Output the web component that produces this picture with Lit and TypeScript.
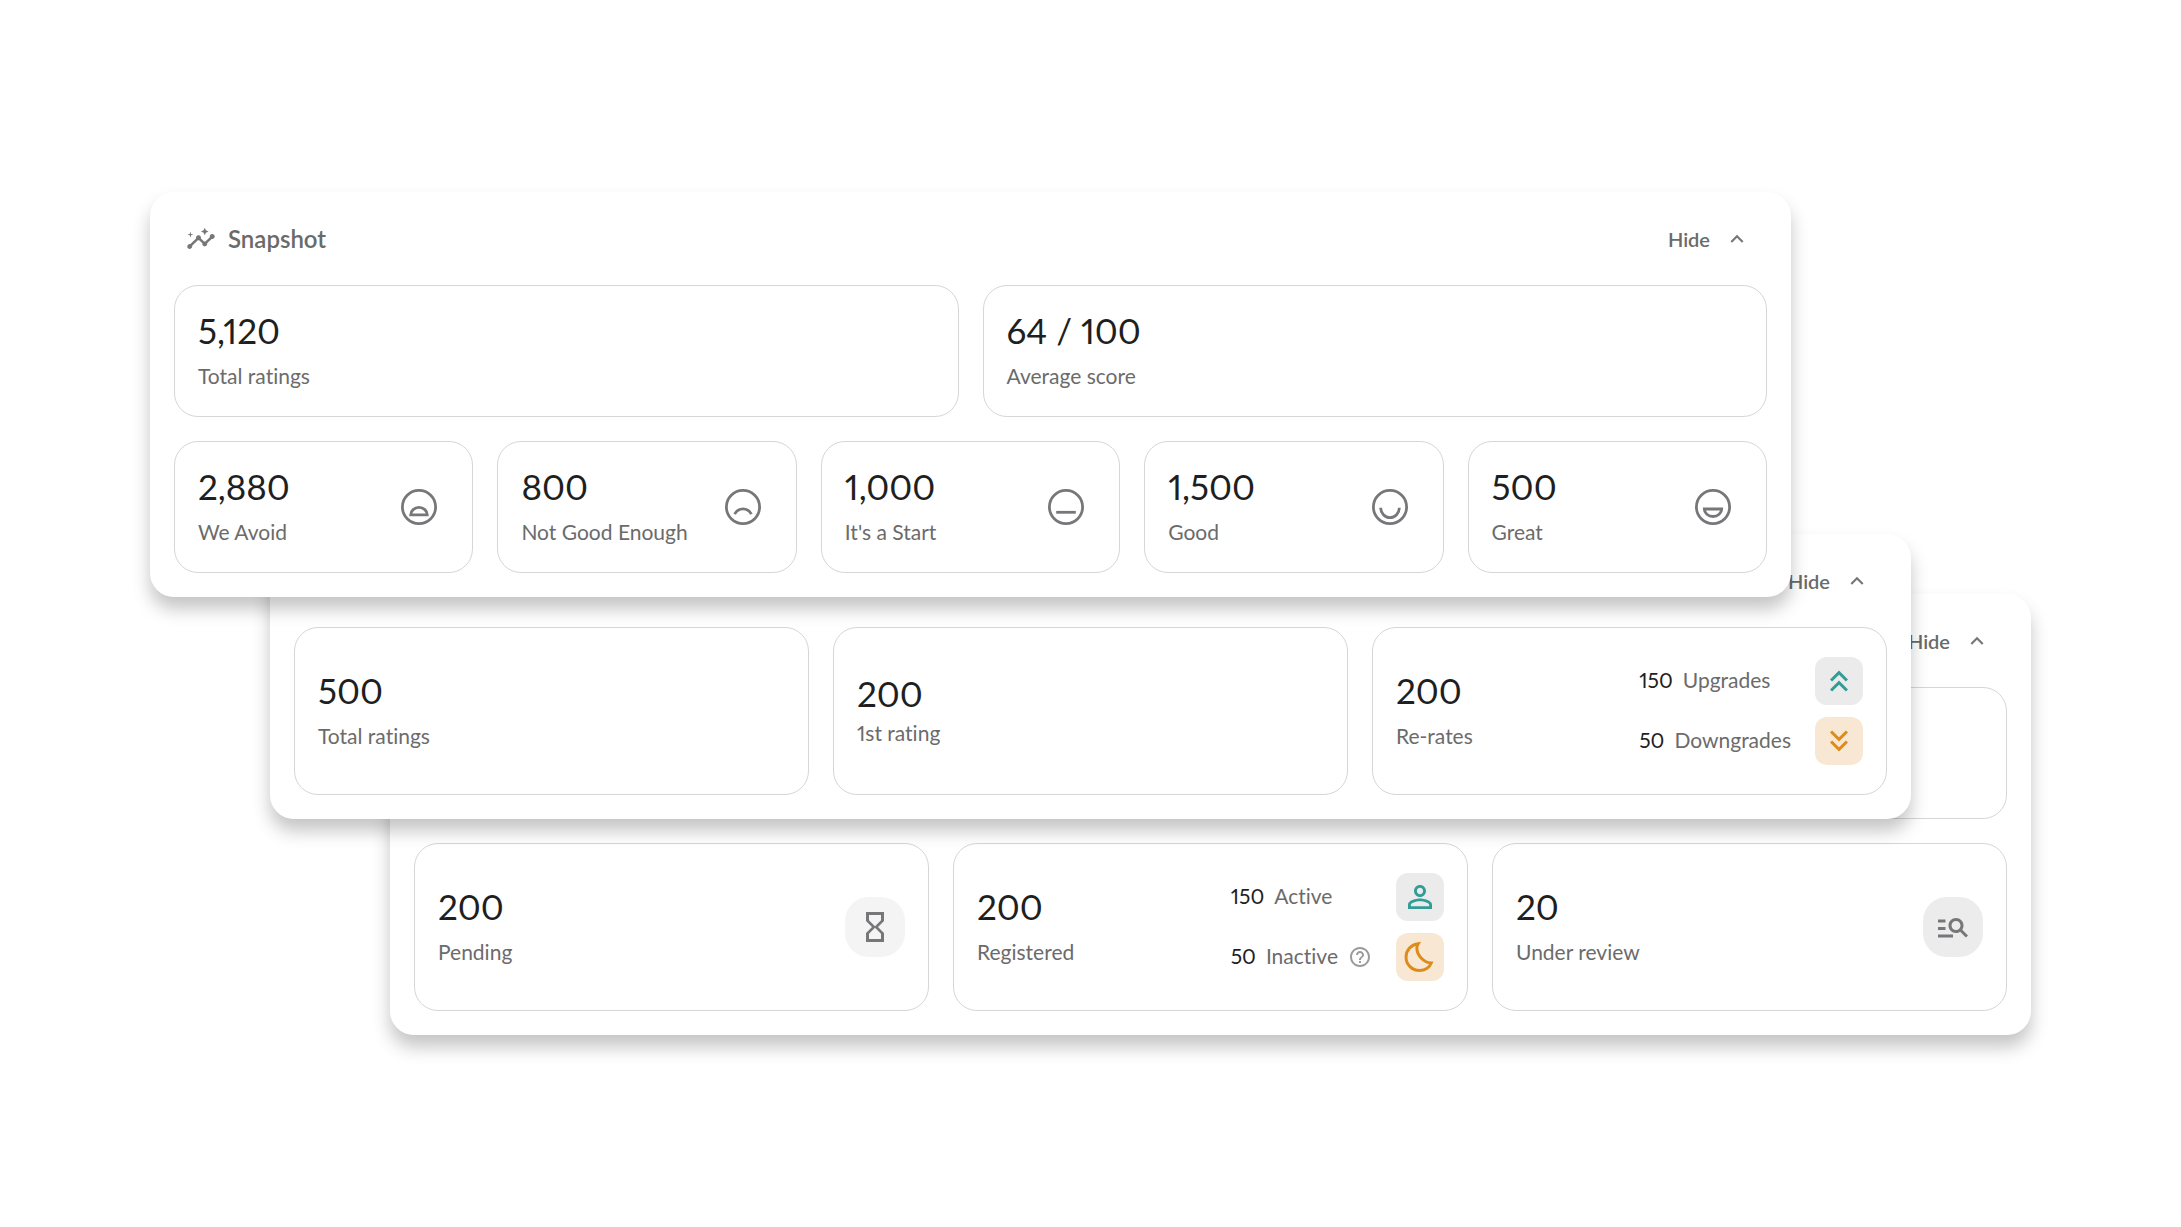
import { LitElement, html, css, svg, nothing, type TemplateResult } from "lit";
import { customElement, property } from "lit/decorators.js";

const icons: Record<string, TemplateResult> = {
  insights: svg`<path d="M21 8c-1.45 0-2.26 1.44-1.93 2.51l-3.55 3.56c-.3-.09-.74-.09-1.04 0l-2.55-2.55C12.27 10.45 11.46 9 10 9c-1.45 0-2.27 1.44-1.93 2.52l-4.56 4.55C2.44 15.74 1 16.55 1 18c0 1.1.9 2 2 2 1.45 0 2.26-1.44 1.93-2.51l4.55-4.56c.3.09.74.09 1.04 0l2.55 2.55C12.73 16.55 13.54 18 15 18c1.45 0 2.27-1.44 1.93-2.52l3.56-3.55C21.56 12.26 23 11.45 23 10c0-1.1-.9-2-2-2z"/><path d="M15 9l.94-2.07L18 6l-2.06-.93L15 3l-.92 2.07L12 6l2.08.93zM3.5 11 4 9l2-.5L4 8l-.5-2L3 8l-2 .5L3 9z"/>`,
  collapse: svg`<path d="M12 8l-6 6 1.41 1.41L12 10.83l4.59 4.58L18 14z"/>`,
  upgrades: svg`<path d="M6 17.59 7.41 19 12 14.42 16.59 19 18 17.59l-6-6z"/><path d="M6 11l1.41 1.41L12 7.83l4.59 4.58L18 11l-6-6z"/>`,
  downgrades: svg`<path d="M18 6.41 16.59 5 12 9.58 7.41 5 6 6.41l6 6z"/><path d="M18 13l-1.41-1.41L12 16.17l-4.59-4.58L6 13l6 6z"/>`,
  person: svg`<path d="M12 5.9c1.16 0 2.1.94 2.1 2.1s-.94 2.1-2.1 2.1S9.9 9.16 9.9 8s.94-2.1 2.1-2.1m0 9c2.97 0 6.1 1.46 6.1 2.1v1.1H5.9V17c0-.64 3.13-2.1 6.1-2.1M12 4C9.79 4 8 5.79 8 8s1.79 4 4 4 4-1.79 4-4-1.79-4-4-4zm0 9c-2.67 0-8 1.34-8 4v3h16v-3c0-2.66-5.33-4-8-4z"/>`,
  moon: svg`<path fill="none" stroke="currentColor" stroke-width="2" d="M10.8 3.1C6.2 3.600 2.700 7.500 2.700 12.100c0 4.900 4 8.900 8.900 8.900 3.600 0 6.800-2 7.900-5C14.700 15.800 9.900 11 9.900 6c0-1.100.4-2.100.9-2.900z"/>`,
  help: svg`<path d="M11 18h2v-2h-2v2zm1-16C6.48 2 2 6.48 2 12s4.48 10 10 10 10-4.48 10-10S17.52 2 12 2zm0 18c-4.41 0-8-3.59-8-8s3.59-8 8-8 8 3.59 8 8-3.59 8-8 8zm0-14c-2.21 0-4 1.79-4 4h2c0-1.1.9-2 2-2s2 .9 2 2c0 2-3 1.75-3 5h2c0-2.25 3-2.5 3-5 0-2.21-1.79-4-4-4z"/>`,
  hourglass: svg`<path d="M6 2v6h.01L6 8.01 10 12l-4 4 .01.01H6V22h12v-5.99h-.01L18 16l-4-4 4-3.99-.01-.01H18V2H6zm10 14.5V20H8v-3.5l4-4 4 4zm-4-5-4-4V4h8v3.5l-4 4z"/>`,
  review: svg`<path d="M7 9H2V7h5v2zm0 3H2v2h5v-2zm13.59 7-3.83-3.83c-.8.52-1.74.83-2.76.83-2.76 0-5-2.24-5-5s2.24-5 5-5 5 2.24 5 5c0 1.02-.31 1.96-.83 2.75L22 17.59 20.59 19zM17 11c0-1.65-1.35-3-3-3s-3 1.35-3 3 1.35 3 3 3 3-1.35 3-3zM2 19h10v-2H2v2z"/>`,
};

// Mouth shapes, drawn inside a 36-unit face
const mouths: Record<string, TemplateResult> = {
  avoid: svg`<path d="M9.7 25.9a8.3 7.5 0 0 1 16.6 0z"/>`,
  frown: svg`<path d="M9.6 25.2c3.7-7.2 13.1-7.2 16.8 0"/>`,
  flat: svg`<path d="M8.2 23.3h19.6"/>`,
  smile: svg`<path d="M8.7 18.8a9.3 9.9 0 0 0 18.6 0"/>`,
  grin: svg`<path d="M9.3 20h17.4a8.7 7.5 0 0 1-17.4 0z"/>`,
};

const icon = (name: string, size: string) =>
  html`<svg class="icon ${size}" viewBox="0 0 24 24" fill="currentColor" aria-hidden="true">${icons[name]}</svg>`;

const face = (name: string) =>
  html`<svg class="face" viewBox="0 0 36 36" fill="none" stroke="currentColor" stroke-width="2.8" aria-hidden="true">
    <circle cx="18" cy="18" r="16.6"></circle>${mouths[name]}
  </svg>`;

interface Detail { count: string; label: string; icon: string; tone: string; help?: boolean }

@customElement("stat-card")
class StatCard extends LitElement {
  @property() value = "";
  @property() label = "";
  @property() face = "";
  @property() badge = "";
  @property() tone = "";
  @property({ type: Boolean }) tight = false;
  @property({ attribute: false }) details: Detail[] = [];

  static styles = css`
    :host {
      display: flex;
      align-items: center;
      gap: 24px;
      box-sizing: border-box;
      min-height: 132px;
      padding: 22px 23px;
      border: 1px solid #d6d6d6;
      border-radius: 24px;
      color: #6b6b6b;
    }
    .stat { display: flex; flex: 1; flex-direction: column; gap: 8px; min-width: 0; padding-bottom: 2px; }
    .stat.tight { gap: 2px; }
    .value { color: #1f1f1f; font-size: 35px; line-height: 44px; }
    .label { font-size: 21px; line-height: 32px; white-space: nowrap; }
    .icon { display: block; flex: none; }
    .large { width: 36px; height: 36px; }
    .small { width: 24px; height: 24px; }
    .face { flex: none; width: 36px; height: 36px; margin-right: 12px; color: #77777a; }
    .badge { display: grid; place-items: center; flex: none; width: 60px; height: 60px; border-radius: 24px; color: #77777a; }
    .pale { background: #f4f4f4; }
    .grey { background: #ececec; }
    .details { display: flex; flex-direction: column; gap: 12px; margin: 0; padding: 0; list-style: none; }
    .detail { display: flex; align-items: center; justify-content: space-between; gap: 24px; }
    .text { display: flex; align-items: center; gap: 10px; padding-bottom: 2px; font-size: 21px; line-height: 32px; white-space: nowrap; }
    .count { color: #1f1f1f; }
    .chip { display: grid; place-items: center; width: 48px; height: 48px; border-radius: 12px; }
    .teal { background: #ebebeb; color: #329d97; }
    .amber { background: #f8e8d3; color: #dd8c1a; }
    .help { display: block; padding: 2px 0 0; border: 0; background: none; color: #9b9b9b; }
  `;

  render() {
    return html`
      ${this.value
        ? html`<div class="stat ${this.tight ? "tight" : ""}">
            <span class="value">${this.value}</span>
            <span class="label">${this.label}</span>
          </div>`
        : nothing}
      ${this.face ? face(this.face) : nothing}
      ${this.badge ? html`<span class="badge ${this.tone}">${icon(this.badge, "large")}</span>` : nothing}
      ${this.details.length
        ? html`<ul class="details">
            ${this.details.map(
              (d) => html`<li class="detail">
                <span class="text">
                  <span class="count">${d.count}</span><span>${d.label}</span>
                  ${d.help ? html`<button class="help" type="button">${icon("help", "small")}</button>` : nothing}
                </span>
                <span class="chip ${d.tone}">${icon(d.icon, "large")}</span>
              </li>`,
            )}
          </ul>`
        : nothing}
    `;
  }
}

@customElement("stat-panel")
class StatPanel extends LitElement {
  @property() heading = "";

  static styles = css`
    :host {
      display: block;
      padding: 0 24px 24px;
      border-radius: 24px;
      background: #fff;
      box-shadow: 0 12px 18px rgba(0, 0, 0, 0.23);
      color: #6a6a6a;
    }
    .header { display: flex; align-items: center; justify-content: space-between; height: 93px; padding: 0 17px 0 12px; }
    .title { display: flex; align-items: center; gap: 12px; margin: 0; font-size: 24px; font-weight: 600; line-height: 32px; }
    .icon { display: block; width: 30px; height: 30px; color: #77777a; }
    .hide { display: flex; align-items: center; gap: 14px; margin-left: auto; padding: 0; border: 0; background: none; color: inherit; font: inherit; font-size: 20px; font-weight: 600; line-height: 32px; }
    .icon.chevron { width: 26px; height: 26px; }
    .body { display: grid; gap: 24px; }
  `;

  render() {
    return html`
      <header class="header">
        ${this.heading ? html`<h2 class="title">${icon("insights", "")}${this.heading}</h2>` : nothing}
        <button class="hide" type="button">Hide ${icon("collapse", "chevron")}</button>
      </header>
      <div class="body"><slot></slot></div>
    `;
  }
}

@customElement("app-root")
class AppRoot extends LitElement {
  static styles = css`
    :host {
      display: block;
      box-sizing: border-box;
      min-height: 100vh;
      padding: 192px 150px;
      background: #fff;
      font-family: Lato, "Open Sans", sans-serif;
      font-variant-ligatures: none;
      font-variant-numeric: proportional-nums;
    }
    .stack { display: flex; flex-direction: column; }
    .panel { position: relative; }
    .front { z-index: 3; margin-right: 240px; }
    .middle { z-index: 2; margin: -63px 120px 0; }
    .back { z-index: 1; margin: -225px 0 0 240px; }
    .row { display: grid; grid-auto-columns: minmax(0, 1fr); grid-auto-flow: column; gap: 24px; }
    .tall { min-height: 168px; }
  `;

  private rerates: Detail[] = [
    { count: "150", label: "Upgrades", icon: "upgrades", tone: "teal" },
    { count: "50", label: "Downgrades", icon: "downgrades", tone: "amber" },
  ];

  private registered: Detail[] = [
    { count: "150", label: "Active", icon: "person", tone: "teal" },
    { count: "50", label: "Inactive", icon: "moon", tone: "amber", help: true },
  ];

  render() {
    return html`
      <main class="stack">
        <stat-panel class="panel front" heading="Snapshot">
          <div class="row">
            <stat-card value="5,120" label="Total ratings"></stat-card>
            <stat-card value="64 / 100" label="Average score"></stat-card>
          </div>
          <div class="row">
            <stat-card value="2,880" label="We Avoid" face="avoid"></stat-card>
            <stat-card value="800" label="Not Good Enough" face="frown"></stat-card>
            <stat-card value="1,000" label="It's a Start" face="flat"></stat-card>
            <stat-card value="1,500" label="Good" face="smile"></stat-card>
            <stat-card value="500" label="Great" face="grin"></stat-card>
          </div>
        </stat-panel>
        <stat-panel class="panel middle">
          <div class="row">
            <stat-card class="tall" value="500" label="Total ratings"></stat-card>
            <stat-card class="tall" value="200" label="1st rating" tight></stat-card>
            <stat-card class="tall" value="200" label="Re-rates" .details=${this.rerates}></stat-card>
          </div>
        </stat-panel>
        <stat-panel class="panel back">
          <div class="row"><stat-card></stat-card></div>
          <div class="row">
            <stat-card class="tall" value="200" label="Pending" badge="hourglass" tone="pale"></stat-card>
            <stat-card class="tall" value="200" label="Registered" .details=${this.registered}></stat-card>
            <stat-card class="tall" value="20" label="Under review" badge="review" tone="grey"></stat-card>
          </div>
        </stat-panel>
      </main>
    `;
  }
}
